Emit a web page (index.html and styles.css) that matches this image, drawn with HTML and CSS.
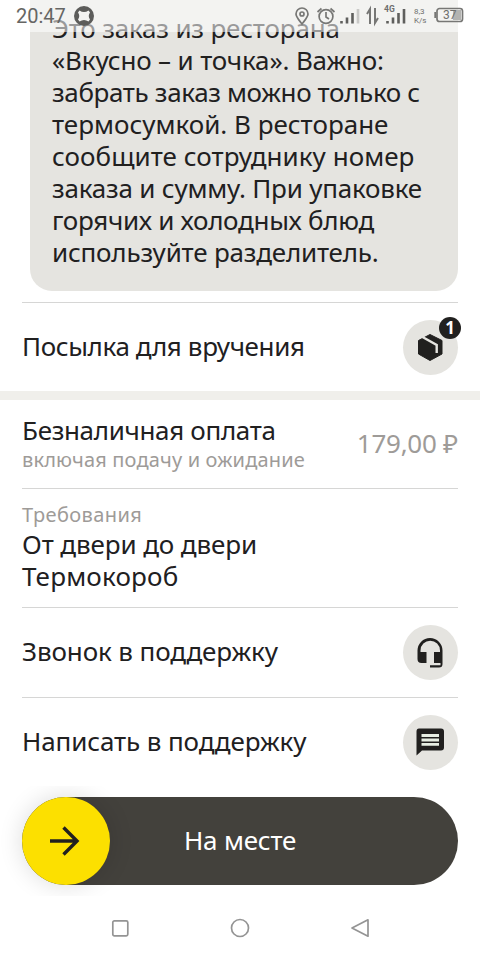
FILE: index.html
```html
<!DOCTYPE html>
<html lang="ru">
<head>
<meta charset="utf-8">
<title>Заказ</title>
<link rel="stylesheet" href="styles.css">
</head>
<body>
<div class="screen">
  <header class="status">
    <span class="clock">20:47</span>
    <svg class="app-icon" width="20" height="20" viewBox="0 0 20 20"><path fill="#5c5c5a" fill-rule="evenodd" d="M10 0a10 10 0 1 0 0 20 10 10 0 0 0 0-20ZM5.500 4.500q4.500 3 9 0l1.500 2q-2.500 3.500 0 7l-1.500 2q-4.500-3-9 0l-1.500-2q2.500-3.500 0-7Z"/></svg>
    <svg class="indicators" width="176" height="30" viewBox="294 0 176 30" fill="none" stroke="#777775" stroke-width="1.7">
      <path d="M302 24c-3-4-6-7-6-10a6 6 0 0 1 12 0c0 3-3 6-6 10Z"/><circle cx="302" cy="14" r="2"/>
      <circle cx="326" cy="16.500" r="6.900"/><path d="M326 12v5l3 2M317.500 12l4-3.500M334.500 12l-4-3.500"/>
      <path stroke-width="2.6" stroke="#5f5f5d" d="M341.500 21v2.500M347 17.500v6M352.500 13v10.500"/><path stroke="#c9c9c7" stroke-width="2.6" d="M358 9v14.500"/>
      <path stroke-width="2" d="M370 24V9l-3 5M375 8v15l3-5"/>
      <path stroke-width="2.6" stroke="#5f5f5d" d="M387.500 21v2.500M393 17.500v6M398.500 13v10.500M404 9v14.500"/>
      <rect x="437" y="8.500" width="25.500" height="13" rx="2.500"/><path stroke-width="2" d="M435.300 12v6"/>
      <path fill="#b3b3b1" stroke="none" d="M453 10h8v10h-8z"/>
      <g class="tiny"><text x="384" y="11.500" font-size="8.500" font-weight="700">4G</text><text x="414" y="14" font-size="8">8,3</text><text x="414" y="23" font-size="8">K/s</text><text x="443" y="19" font-size="12">37</text></g>
    </svg>
  </header>
  <main>
    <section class="message">
      <p class="l1">Это заказ из ресторана</p>
      <p class="l2">«Вкусно – и точка». Важно:</p>
      <p class="l3">забрать заказ можно только с</p>
      <p class="l4">термосумкой. В ресторане</p>
      <p class="l5">сообщите сотруднику номер</p>
      <p class="l6">заказа и сумму. При упаковке</p>
      <p class="l7">горячих и холодных блюд</p>
      <p class="l8">используйте разделитель.</p>
    </section>
    <section class="row parcel">
      <h2>Посылка для вручения</h2>
      <span class="round">
        <svg width="55" height="55" viewBox="0 0 55 55"><path fill="#21201f" stroke="#21201f" stroke-linejoin="round" d="m15.500 20.500 11.500-6 12 6v13.500L27 40.500 15.500 34Z"/><path fill="none" stroke="#e5e4e0" stroke-width="2.400" d="m19.500 17 14.200 8v8"/></svg>
        <b class="badge">1</b>
      </span>
    </section>
    <div class="band"></div>
    <section class="row payment">
      <div><h2>Безналичная оплата</h2><p class="note">включая подачу и ожидание</p></div>
      <span class="price">179,00 ₽</span>
    </section>
    <section class="row needs">
      <div><p class="note">Требования</p><h2>От двери до двери</h2><h2 class="thermo">Термокороб</h2></div>
    </section>
    <section class="row call">
      <h2>Звонок в поддержку</h2>
      <span class="round"><svg width="55" height="55" viewBox="0 0 55 55"><path fill="#21201f" d="M14.500 25.500a12.500 12.500 0 0 1 25 0v13.500a3.500 3.500 0 0 1-3.500 3.500h-9v-2.200h10.500v-2.300h-6.500V27h6v-1.500a9.500 9.500 0 0 0-19.500 0V27h6v11h-5a4 4 0 0 1-4-4Z"/></svg></span>
    </section>
    <section class="row write">
      <h2>Написать в поддержку</h2>
      <span class="round"><svg width="55" height="55" viewBox="0 0 55 55"><path fill="#21201f" d="M16 13.500h22q3 0 3 3v16q0 3-3 3H19l-5.500 5v-24q0-3 2.500-3Z"/><path stroke="#e7eee3" stroke-width="2.800" d="M18.500 20.500h17.500M18.500 25h17.500M18.500 29.400h17.500"/></svg></span>
    </section>
    <div class="action">
      <button class="slider"><span class="knob"><svg width="30" height="30" viewBox="0 0 30 30" fill="none" stroke="#21201f" stroke-width="3.400"><path d="M0 15h27M13.500 1.500 27 15 13.500 28.500"/></svg></span><span class="label">На месте</span></button>
    </div>
  </main>
  <nav>
    <svg width="20" height="20" viewBox="0 0 20 20"><rect x="2.800" y="2.800" width="15" height="15" rx="1.500"/></svg>
    <svg width="20" height="20" viewBox="0 0 20 20"><circle cx="10" cy="10" r="8.500"/></svg>
    <svg width="20" height="20" viewBox="0 0 20 20"><path stroke-linejoin="round" d="M2 10 18 1.800v16.400Z"/></svg>
  </nav>
</div>
</body>
</html>
```
FILE: styles.css
```css
* { box-sizing: border-box; margin: 0; padding: 0; }
body { background: #fff; color: #21201f; font: 26px/32px "Noto Sans", sans-serif; }
.screen { position: relative; width: 480px; height: 960px; overflow: hidden; }
.status { position: absolute; z-index: 2; top: 0; left: 0; width: 480px; height: 32px; background: rgba(255,255,255,.55); display: flex; padding-left: 16px; }
.clock { font: 20px/33px Roboto, sans-serif; color: #666664; width: 58px; white-space: nowrap; }
.app-icon { margin-top: 6px; }
.indicators { margin-left: 200px; }
.tiny { font-family: Roboto, sans-serif; fill: #6f6f6d; stroke: none; }
.message { margin-left: 30px; width: 428px; height: 291px; padding: 12px 0 0 22px; background: #e5e4e0; border-radius: 0 0 22px 22px; white-space: nowrap; }
.l1 { letter-spacing: -.18px; }
.l2 { letter-spacing: -.16px; }
.l3 { letter-spacing: -.36px; }
.l5 { letter-spacing: .04px; }
.l6 { letter-spacing: -.21px; }
.l7 { letter-spacing: -.3px; }
.l8 { letter-spacing: -.2px; }
h2 { font-size: 26px; font-weight: 400; line-height: 32px; white-space: nowrap; letter-spacing: -.11px; }
.row { margin: 0 22px; display: flex; align-items: center; justify-content: space-between; border-top: 1px solid #d6d6d5; }
.row > h2 { padding-bottom: 3px; }
.parcel { margin-top: 11px; height: 89px; }
.parcel h2 { letter-spacing: -.37px; }
.round { position: relative; width: 55px; height: 55px; border-radius: 50%; background: #e5e4e0; flex: none; }
.round svg { display: block; width: 55px; height: 55px; }
.badge { position: absolute; right: -3px; top: -3px; width: 22px; height: 22px; border-radius: 50%; background: #21201f; color: #fff; font-size: 17px; line-height: 22px; text-align: center; }
.band { height: 9px; background: #f0efeb; }
.payment { border-top: 0; height: 88px; }
.payment h2 { letter-spacing: -.33px; margin-top: -2px; padding-bottom: 1px; }
.note { font-size: 20px; line-height: 26px; color: #9e9b98; white-space: nowrap; letter-spacing: .16px; }
.price { color: #9e9b98; white-space: nowrap; letter-spacing: -.25px; padding-bottom: 2px; }
.needs { height: 119px; padding-bottom: 2px; }
.needs .note { letter-spacing: .4px; }
.needs .thermo { letter-spacing: .2px; }
.call { height: 90px; }
.write { height: 89px; }
.action { height: 110px; padding: 11px 22px 0; overflow: hidden; }
.slider { position: relative; display: flex; width: 436px; height: 88px; border: 0; border-radius: 44px; background: #43413c; color: #fff; font: 26px/88px "Noto Sans", sans-serif; }
.knob { width: 88px; height: 88px; border-radius: 50%; background: #fce000; display: grid; place-items: center; box-shadow: 0 0 24px rgba(0,0,0,.14); }
.knob svg { margin-right: 2px; }
.label { margin-left: 74px; white-space: nowrap; letter-spacing: -.2px; line-height: 86px; }
nav { height: 64px; display: flex; justify-content: center; align-items: center; gap: 100px; }
nav svg { fill: none; stroke: #949494; stroke-width: 1.700; }
```
